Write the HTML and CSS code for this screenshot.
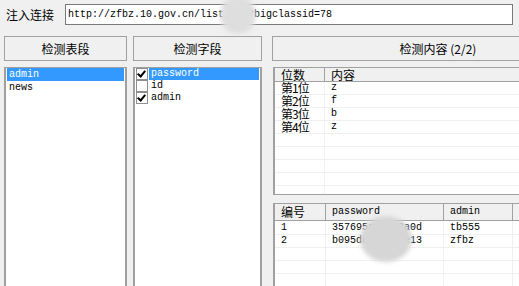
FILE: index.html
```html
<!DOCTYPE html>
<html>
<head>
	<title>注入检测</title>
	<link rel="stylesheet" href="styles.css">
</head>
<body>
	<div class="top">
		<label for="url">注入连接</label>
		<input type="text" id="url" value="http://zfbz.10.gov.cn/list.asp?bigclassid=78">
	</div>
	<div class="main">
		<div class="col col1">
			<div class="btn">检测表段</div>
			<ul class="list">
				<li class="sel">admin</li>
				<li>news</li>
			</ul>
		</div>
		<div class="col col2">
			<div class="btn">检测字段</div>
			<ul class="list">
				<li><span class="chk on"></span><span class="sel">password</span></li>
				<li><span class="chk"></span><span>id</span></li>
				<li><span class="chk on"></span><span>admin</span></li>
			</ul>
		</div>
		<div class="col col3">
			<div class="btn">检测内容 (2/2)</div>
			<div class="view view1">
				<table>
					<tr class="head"><th class="c1">位数</th><th>内容</th></tr>
					<tr><td class="c1 cn">第1位</td><td>z</td></tr>
					<tr><td class="c1 cn">第2位</td><td>f</td></tr>
					<tr><td class="c1 cn">第3位</td><td>b</td></tr>
					<tr><td class="c1 cn">第4位</td><td>z</td></tr>
					<tr><td class="c1"></td><td></td></tr>
					<tr><td class="c1"></td><td></td></tr>
					<tr><td class="c1"></td><td></td></tr>
					<tr><td class="c1"></td><td></td></tr>
					<tr><td class="c1"></td><td></td></tr>
				</table>
			</div>
			<div class="view view2">
				<table>
					<tr class="head"><th class="c1 cn">编号</th><th class="c2">password</th><th class="c3">admin</th><th></th></tr>
					<tr><td class="c1">1</td><td class="c2">357695a6b5e2a0d</td><td class="c3">tb555</td><td></td></tr>
					<tr><td class="c1">2</td><td class="c2">b095d8c6e4f7e13</td><td class="c3">zfbz</td><td></td></tr>
					<tr><td class="c1"></td><td class="c2"></td><td class="c3"></td><td></td></tr>
					<tr><td class="c1"></td><td class="c2"></td><td class="c3"></td><td></td></tr>
					<tr><td class="c1"></td><td class="c2"></td><td class="c3"></td><td></td></tr>
				</table>
			</div>
		</div>
	</div>
	<div class="blur b1"></div>
	<div class="blur b2"></div>
</body>
</html>
```

FILE: styles.css
```css
html{
	overflow:hidden;
}
body{
	margin:0;
	padding:0;
	width:519px;
	height:286px;
	overflow:hidden;
	position:relative;
	background-color:#f0f0f0;
	font-family:"Liberation Mono","Noto Sans CJK SC",monospace;
	font-size:10px;
	color:#000;
}
.top{
	display:flex;
	align-items:center;
	height:21px;
	padding:4px 0 0 6px;
}
.top label{
	font-family:"Noto Sans CJK SC",sans-serif;
	font-size:12px;
	width:59px;
}
#url{
	box-sizing:border-box;
	width:448px;
	height:21px;
	margin:0;
	padding:0 0 0 2px;
	border:1px solid #7a7a7a;
	background:#fff;
	font-family:"Liberation Mono",monospace;
	font-size:10px;
	outline:none;
}
.main{
	display:flex;
	width:620px;
	margin-top:11px;
	padding-left:4px;
}
.col{
	display:flex;
	flex-direction:column;
	flex-shrink:0;
}
.col1{
	flex:0 0 123px;
}
.col2{
	flex:0 0 129px;
	margin-left:6px;
}
.col3{
	flex:0 0 332px;
	margin-left:10px;
}
.btn{
	box-sizing:border-box;
	height:25px;
	line-height:23px;
	border:1px solid #a0a0a0;
	background-color:#f0f0f0;
	text-align:center;
	font-family:"Noto Sans CJK SC",sans-serif;
	font-size:12px;
}
.list{
	box-sizing:border-box;
	height:230px;
	margin:6px 0 0 0;
	padding:0 1px;
	list-style:none;
	background:#fff;
	border:2px solid #a0a0a0;
	border-top-width:1px;
}
.col1 .list li{
	height:13px;
	line-height:13px;
	padding-left:2px;
}
.col1 .list li.sel{
	background:#3399ff;
	color:#fff;
}
.col2 .list li{
	display:flex;
	height:12px;
	line-height:12px;
}
.col2 .list li span:last-child{
	flex:1;
	padding-left:2px;
}
.col2 .list li span.sel{
	background:#3399ff;
	color:#fff;
}
.chk{
	box-sizing:border-box;
	display:inline-block;
	width:12px;
	height:12px;
	margin-right:1px;
	border:1px solid #8f8f8f;
	background:#fff;
	position:relative;
}
.chk.on::after{
	content:"";
	position:absolute;
	left:2px;
	top:0px;
	width:3px;
	height:6px;
	border:solid #000;
	border-width:0 2px 2px 0;
	transform:rotate(40deg);
}
.view{
	box-sizing:border-box;
	margin-left:1px;
	background:#fff;
	border:1px solid #a0a0a0;
	border-left-width:2px;
	overflow:hidden;
}
.view1{
	height:128px;
	margin-top:6px;
}
.view2{
	height:90px;
	margin-top:8px;
}
table{
	border-collapse:collapse;
	width:100%;
	table-layout:fixed;
}
th{
	font-weight:normal;
	text-align:left;
	background:#f0f0f0;
	border-right:1px solid #a0a0a0;
	border-bottom:1px solid #a0a0a0;
	padding:0 0 0 6px;
	white-space:nowrap;
	overflow:hidden;
}
td{
	height:12px;
	line-height:12px;
	padding:0 0 0 6px;
	border-bottom:1px solid #f0f0f0;
	border-right:1px solid #f0f0f0;
	white-space:nowrap;
	overflow:hidden;
}
.view1 .head th{
	height:13px;
	line-height:13px;
	font-family:"Noto Sans CJK SC",sans-serif;
	font-size:12px;
}
.view1 .c1{
	width:43px;
}
.view1 td.cn{
	font-family:"Noto Sans CJK SC",sans-serif;
	font-size:12px;
	letter-spacing:-1px;
}
.view2 .head th{
	height:16px;
	line-height:16px;
}
.view2 th.cn{
	font-family:"Noto Sans CJK SC",sans-serif;
	font-size:12px;
}
.view2 .c1{
	width:44px;
}
.view2 .c2{
	width:111px;
}
.view2 .c3{
	width:62px;
}
.view2 tr:nth-child(2) td{
	padding-top:1px;
}
.blur{
	position:absolute;
	border-radius:50%;
	filter:blur(2px);
}
.b1{
	left:220px;
	top:-4px;
	width:36px;
	height:38px;
	background:#dedede;
}
.b2{
	left:360px;
	top:216px;
	width:52px;
	height:46px;
	background:#d6d6d6;
}
```
